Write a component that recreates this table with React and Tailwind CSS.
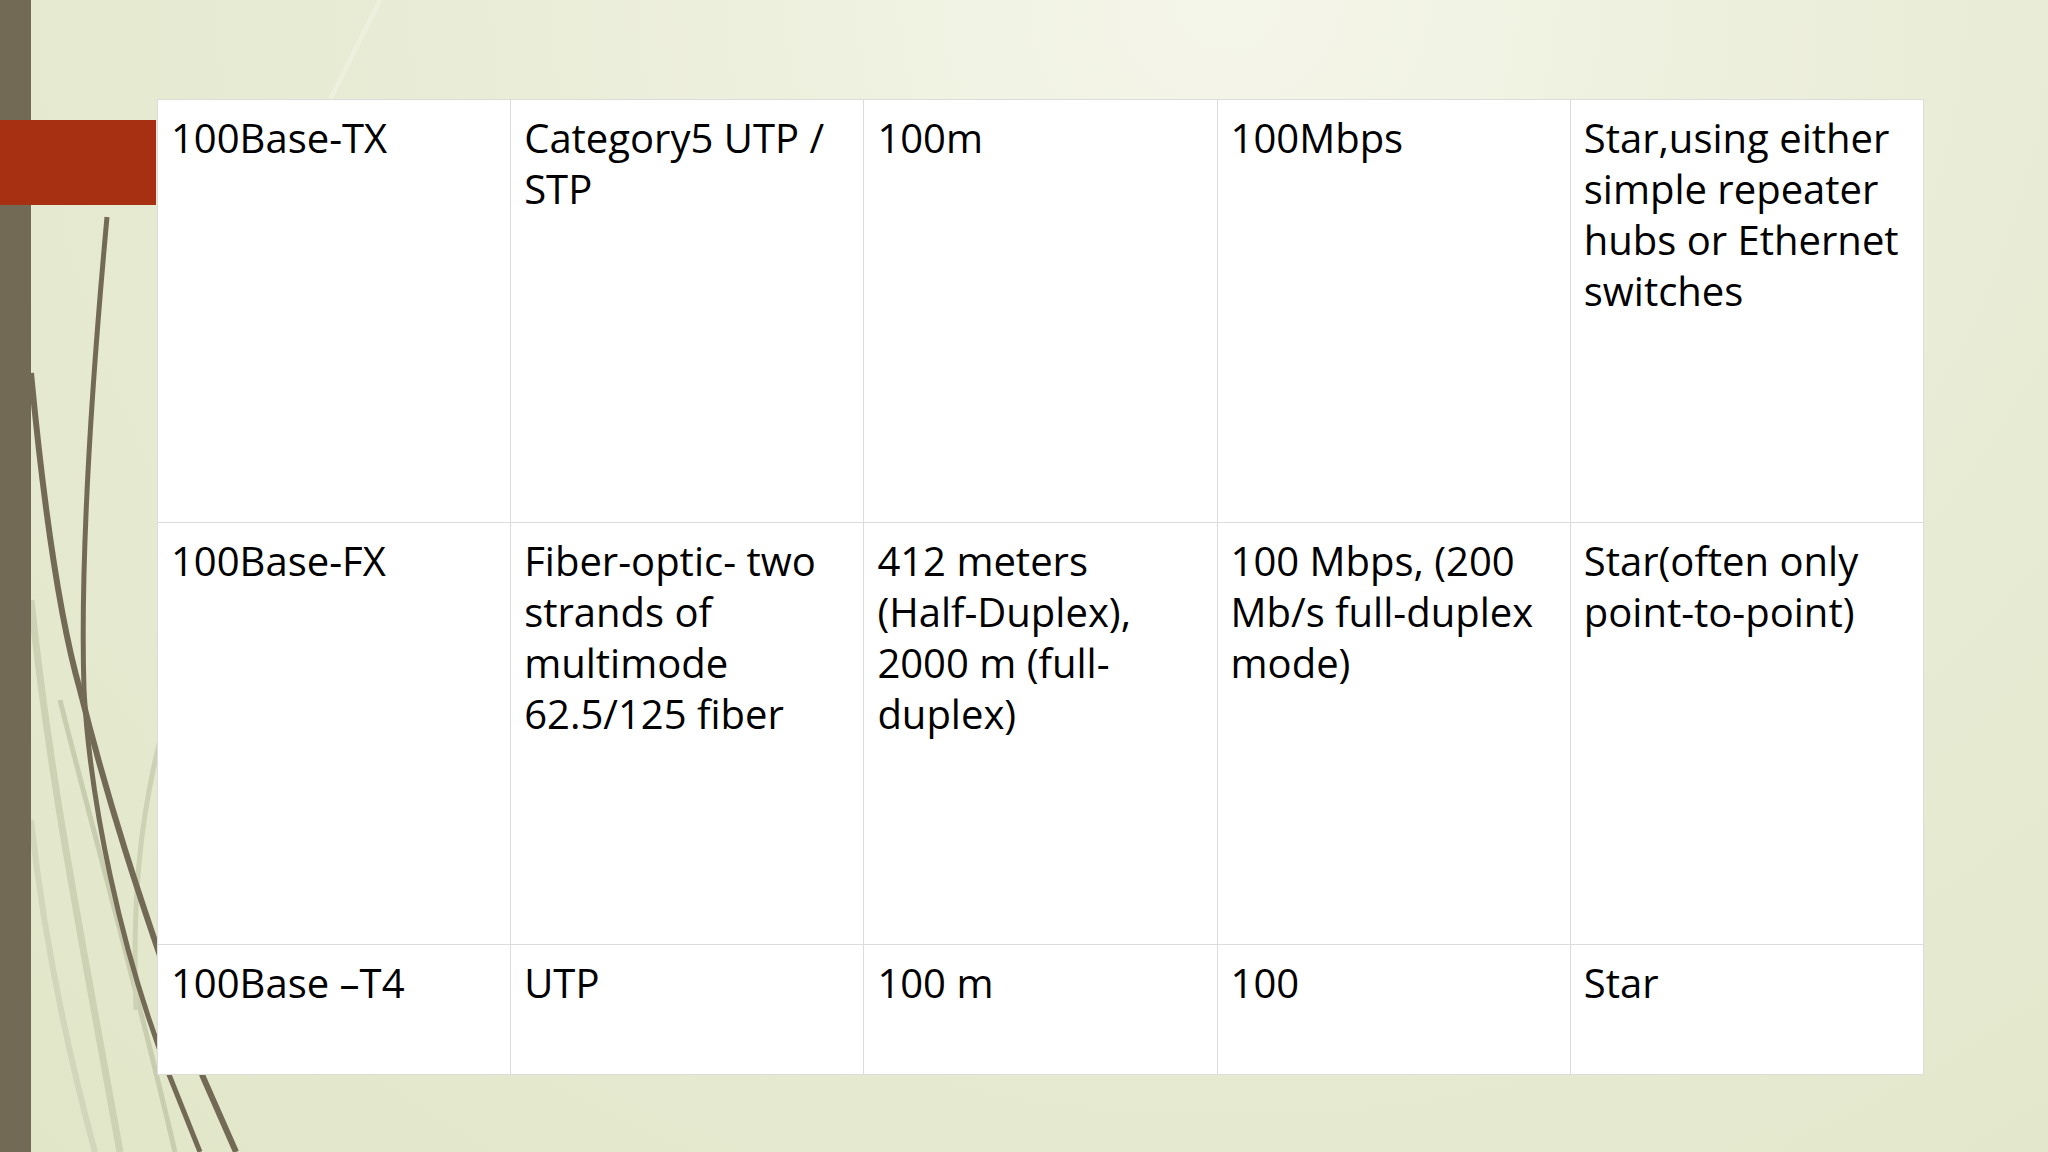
import React from 'react';

const rows = [
  {
    h: 'h-[423px]',
    cells: [
      ['100Base-TX'],
      ['Category5 UTP /', 'STP'],
      ['100m'],
      ['100Mbps'],
      ['Star,using either', 'simple repeater', 'hubs or Ethernet', 'switches'],
    ],
  },
  {
    h: 'h-[422px]',
    cells: [
      ['100Base-FX'],
      ['Fiber-optic- two', 'strands of', 'multimode', '62.5/125 fiber'],
      ['412 meters', '(Half-Duplex),', '2000 m (full-', 'duplex)'],
      ['100 Mbps, (200', 'Mb/s full-duplex', 'mode)'],
      ['Star(often only', 'point-to-point)'],
    ],
  },
  {
    h: 'h-[130px]',
    cells: [['100Base \u2013T4'], ['UTP'], ['100 m'], ['100'], ['Star']],
  },
];

// the grass strokes down the left side of the slide
const Decor = () => (
  <svg className="absolute left-0 top-0" width="400" height="1152" viewBox="0 0 400 1152" fill="none">
    <path d="M31 600 C 50 780 80 930 120 1152" stroke="#cdd2b5" strokeWidth="7" />
    <path d="M31 820 C 45 950 70 1060 95 1152" stroke="#d2d6bb" strokeWidth="6" />
    <path d="M60 700 C 90 820 130 960 175 1152" stroke="#c8cdb0" strokeWidth="5" />
    <path d="M160 740 C 140 820 132 900 136 1010" stroke="#cdd2b5" strokeWidth="5" />
    <path d="M31 373 C 45 520 60 620 80 690 C 105 790 135 890 203 1077 L 236 1152" stroke="#736a55" strokeWidth="6" />
    <path d="M107 217 C 92 380 80 560 84 690 C 90 800 120 950 170 1077 L 200 1152" stroke="#736a55" strokeWidth="5" />
    <path d="M380 0 C 360 40 345 70 330 100" stroke="#eef0de" strokeWidth="5" />
  </svg>
);

export default function App() {
  return (
    <div className="relative w-[2048px] h-[1152px] overflow-hidden bg-[radial-gradient(ellipse_at_60%_0%,#f5f6ea_0%,#e9ecd6_45%,#e1e6c8_100%)] font-['Open_Sans',sans-serif]">
      <Decor />
      <div className="absolute left-0 top-0 w-[31px] h-full bg-[#736a55]" />
      <div className="absolute left-0 top-[120px] w-[156px] h-[85px] bg-[#a63011]" />

      <div className="relative pl-[157px] pt-[99px]">
        <table className="w-[1767px] table-fixed border-collapse bg-white">
          <tbody>
            {rows.map((row, i) => (
              <tr key={i} className={row.h}>
                {row.cells.map((lines, j) => (
                  <td
                    key={j}
                    className="align-top border border-[#dcdcdc] pl-[13px] pr-3 pt-3 text-[40px] leading-[51px] text-black whitespace-nowrap"
                  >
                    {lines.map((l, k) => (
                      <div key={k}>{l}</div>
                    ))}
                  </td>
                ))}
              </tr>
            ))}
          </tbody>
        </table>
      </div>
    </div>
  );
}
